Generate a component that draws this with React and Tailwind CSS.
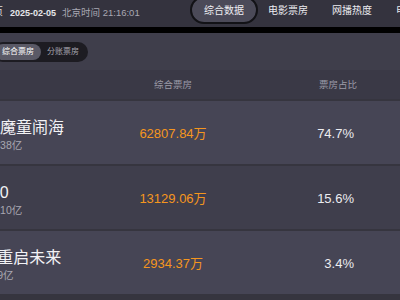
import React from "react";

const rows = [
  { name: "哪吒之魔童闹海", nameCls: "-ml-[2px]", subCls: "ml-0", total: "总票房62.38亿", box: "62807.84万", share: "74.7%", bg: "bg-[#464555]" },
  { name: "唐探1900", nameCls: "-ml-[13px]", subCls: "ml-0", total: "总票房13.10亿", box: "13129.06万", share: "15.6%", bg: "bg-[#3f3e4c]" },
  { name: "熊出没·重启未来", nameCls: "-ml-[10px]", subCls: "ml-[3px]", total: "总票房3.9亿", box: "2934.37万", share: "3.4%", bg: "bg-[#464555]" },
];

const tabs = ["综合数据", "电影票房", "网播热度", "电视收视"];

export default function App() {
  return (
    <div
      className="w-[400px] h-[300px] overflow-hidden bg-[#3f3e4b] text-white"
      style={{ fontFamily: '"Liberation Sans", "Noto Sans CJK SC", sans-serif' }}
    >
      {/* top bar */}
      <div className="h-[27px] bg-[#34333e] flex items-start whitespace-nowrap">
        <div className="w-[192px] shrink-0 flex items-start">
          <span className="-ml-[17px] mt-[5px] text-[10px] leading-[14px] text-[#ddd] shrink-0">首页</span>
          <span className="ml-[7px] mt-[6px] text-[9px] leading-[14px] font-bold text-[#e6e6ea] shrink-0">
            2025-02-05
          </span>
          <span className="ml-[6px] mt-[6px] text-[9.5px] leading-[14px] text-[#a9a8b3] shrink-0">
            北京时间 21:16:01
          </span>
        </div>
        <div className="flex shrink-0">
          {tabs.map((t, i) => (
            <div
              key={t}
              className={
                i === 0
                  ? "h-[24px] -mt-[2px] px-3 flex items-center rounded-full bg-[#4b4a58] outline-2 outline-[#121216] text-[10px] text-[#eeeef2]"
                  : "h-[24px] -mt-[2px] px-3 flex items-center text-[10px] text-[#ececf0]"
              }
            >
              {t}
            </div>
          ))}
        </div>
      </div>
      <div className="h-[6px] bg-black" />

      {/* switch */}
      <div className="h-[37px] flex items-center">
        <div className="-ml-[7px] flex items-center h-[20px] rounded-full bg-[#1d1c22] p-[2px] text-[8px]">
          <div className="h-full px-[7px] flex items-center rounded-full bg-[#5a5966] text-white">综合票房</div>
          <div className="h-full pl-[6px] pr-[7px] flex items-center text-[#a5a4ae]">分账票房</div>
        </div>
      </div>

      {/* header */}
      <div className="h-[29px] bg-[#3a3946] flex items-center text-[9.5px] text-[#9c9ba6] pt-[2px]">
        <div className="w-[120px] shrink-0" />
        <div className="w-[106px] shrink-0 text-center">综合票房</div>
        <div className="w-[131px] shrink-0 text-right">票房占比</div>
      </div>

      {/* list */}
      {rows.map((r) => (
        <div key={r.name} className={`h-[65px] border-t-2 border-[#36353f] ${r.bg} flex items-center`}>
          <div className="w-[166px] -ml-[46px] shrink-0 pt-[5px] whitespace-nowrap">
            <div className={`${r.nameCls} text-[16px] leading-[18px] text-[#f2f2f5]`}>{r.name}</div>
            <div className={`${r.subCls} mt-[2px] text-[10.5px] leading-[13px] text-[#a8a7b1]`}>{r.total}</div>
          </div>
          <div className="w-[106px] shrink-0 text-center text-[13px] text-[#f5961e] pt-[2px]">{r.box}</div>
          <div className="w-[128px] shrink-0 text-right text-[13px] text-[#ececf0] pt-[2px]">{r.share}</div>
        </div>
      ))}
      <div className="h-[6px] bg-[#36353f]" />
    </div>
  );
}
